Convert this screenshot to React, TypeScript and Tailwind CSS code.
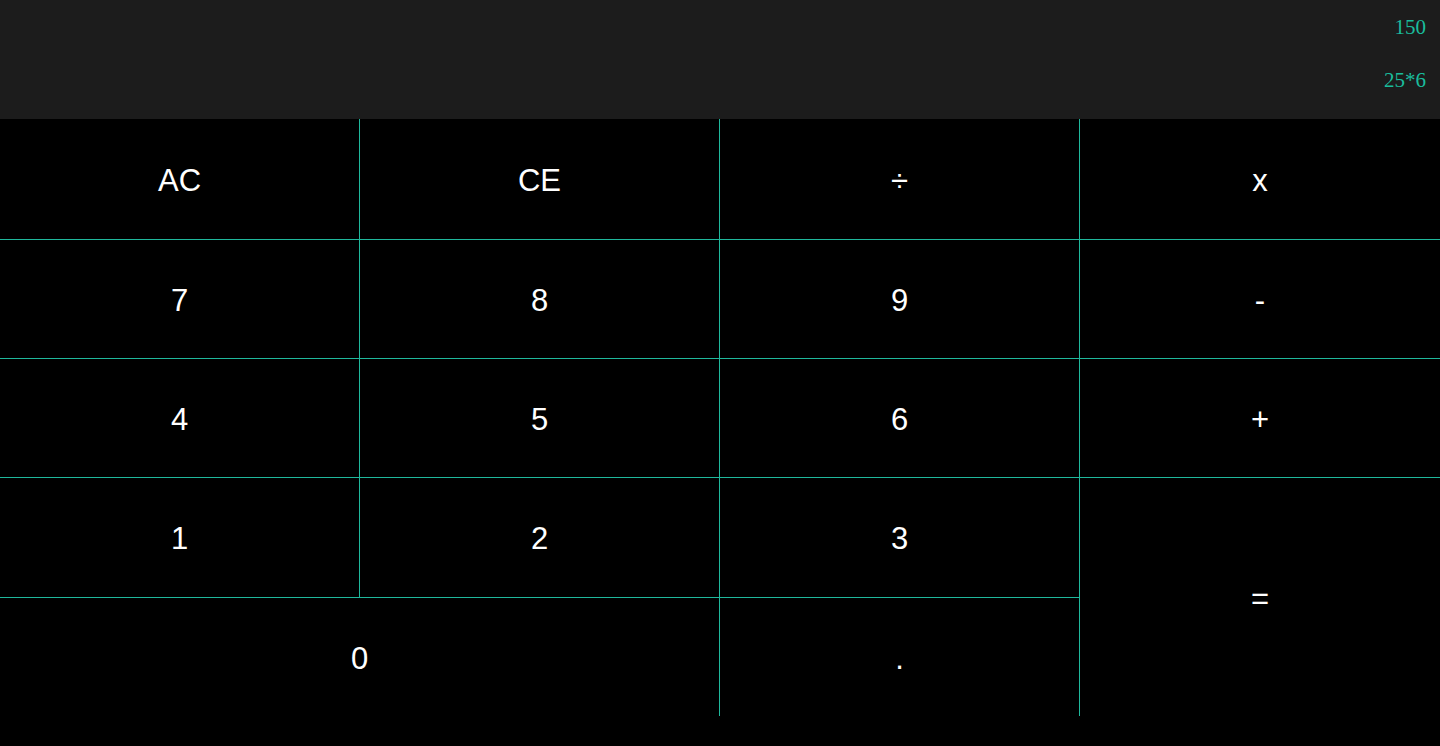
import React from "react";

type Key = { label: string; span?: string };

const keys: Key[] = [
  { label: "AC" },
  { label: "CE" },
  { label: "÷" },
  { label: "x" },
  { label: "7" },
  { label: "8" },
  { label: "9" },
  { label: "-" },
  { label: "4" },
  { label: "5" },
  { label: "6" },
  { label: "+" },
  { label: "1" },
  { label: "2" },
  { label: "3" },
  { label: "=", span: "row-span-2" },
  { label: "0", span: "col-span-2" },
  { label: "." },
];

export default function App() {
  return (
    <div className="min-h-screen bg-black text-white" style={{ fontFamily: "'Liberation Sans', Arial, sans-serif" }}>
      {/* Display */}
      <div
        className="h-[119px] bg-[#1c1c1c] flex flex-col items-end pr-[14px] pt-[17px] text-[21px] text-[#1abc9c] leading-none"
        style={{ fontFamily: "'Liberation Serif', 'Times New Roman', serif" }}
      >
        <div>150</div>
        <div className="mt-[32px]">25*6</div>
      </div>

      {/* Keypad */}
      <div className="grid grid-cols-[359px_359px_359px_1fr] grid-rows-[120px_118px_118px_119px_1fr] gap-px bg-[#1fb89c] h-[597px]">
        {keys.map((k) => (
          <button
            key={k.label}
            className={`bg-black text-white text-[31px] pt-[4px] flex items-center justify-center ${k.span ?? ""}`}
          >
            {k.label}
          </button>
        ))}
      </div>
    </div>
  );
}
